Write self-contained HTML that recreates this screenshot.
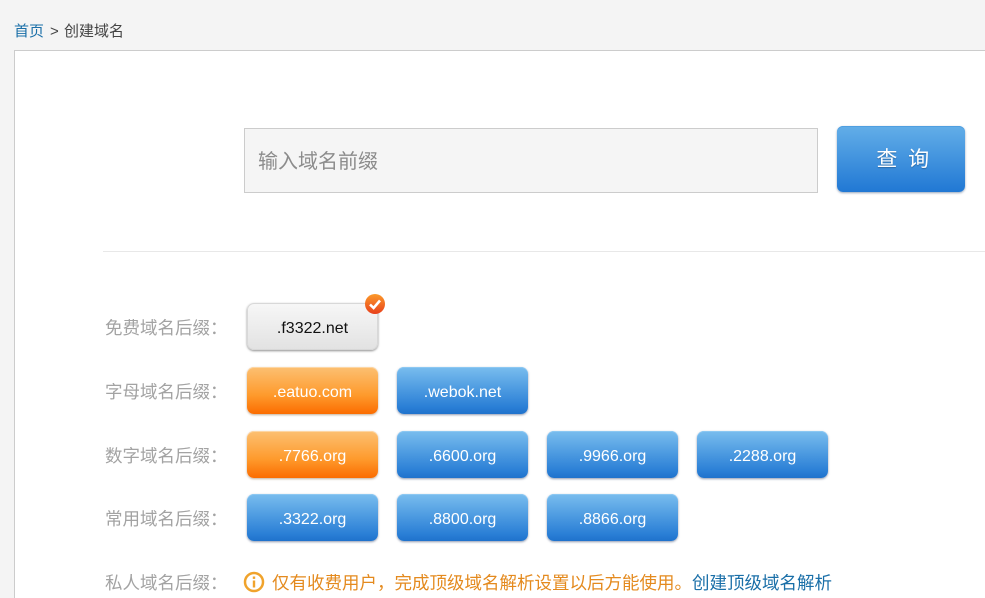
<!DOCTYPE html>
<html lang="zh">
<head>
<meta charset="utf-8">
<title>创建域名</title>
<style>
html,body{margin:0;padding:0;width:985px;height:598px;overflow:hidden;}
body{background:#f4f4f4;position:relative;font-family:"Liberation Sans","Noto Sans CJK SC",sans-serif;}
.abs{position:absolute;white-space:nowrap;}
.crumb{top:22px;font-size:15px;line-height:20px;color:#444;}
.crumb a{color:#1a6fa8;text-decoration:none;}
.panel{position:absolute;left:14px;top:50px;width:971px;height:548px;background:#fff;border:1px solid #ccc;border-right:0;border-bottom:0;box-sizing:border-box;}
.input{position:absolute;left:244px;top:128px;width:574px;height:65px;box-sizing:border-box;background:#f5f5f5;border:1px solid #ccc;font-size:20px;line-height:67px;padding-left:13px;color:#8c8c8c;}
.query{position:absolute;left:837px;top:126px;width:128px;height:66px;border-radius:6px;background:linear-gradient(#63aee8,#2178d4);box-shadow:0 1px 2px rgba(60,90,130,.55),inset 0 1px 0 #4f9fe0;color:#fff;font-size:21px;line-height:68px;text-align:center;letter-spacing:2.5px;text-indent:6px;text-shadow:0 1px 1px rgba(0,0,0,.25);white-space:nowrap;}
.hr{position:absolute;left:103px;top:251px;width:882px;height:1px;background:#e8e8e8;}
.label{position:absolute;left:105px;font-size:17.5px;line-height:26px;color:#a3a3a3;white-space:nowrap;}
.b{position:absolute;width:131px;height:47px;border-radius:7px;font-size:16px;line-height:52px;text-align:center;color:#fff;white-space:nowrap;}
.blue{background:linear-gradient(#79bdee,#2a7fd6 85%,#1f72cc);box-shadow:0 1px 2px rgba(50,70,110,.55),inset 0 1px 0 #8cc8f2;}
.orange{background:linear-gradient(#fcc072,#fe9a2c 60%,#fb6c00);box-shadow:0 1px 2px rgba(120,70,20,.45),inset 0 1px 0 #fdd6a4;}
.gray{background:linear-gradient(#f7f7f7,#e2e2e2);color:#111;box-shadow:0 1px 2px rgba(50,50,50,.55),inset 0 0 0 1px #d8d8d8;}
.note{left:272px;top:570px;font-size:17.5px;line-height:26px;color:#e48a1e;}
.note a{color:#1a6fa8;text-decoration:none;}
</style>
</head>
<body>
<div class="abs crumb" style="left:14px"><a href="#">首页</a></div>
<div class="abs crumb" style="left:50px">&gt;</div>
<div class="abs crumb" style="left:64px">创建域名</div>
<div class="panel"></div>
<div class="input">输入域名前缀</div>
<div class="query">查 询</div>
<div class="hr"></div>

<div class="label" style="top:315px">免费域名后缀：</div>
<div class="b gray" style="left:247px;top:303px">.f3322.net</div>
<svg class="abs" style="left:364px;top:293px" width="22" height="22" viewBox="0 0 22 22">
  <defs><linearGradient id="g" x1="0" y1="0" x2="0" y2="1"><stop offset="0" stop-color="#fb9a2a"/><stop offset="1" stop-color="#e8401c"/></linearGradient></defs>
  <circle cx="11" cy="11" r="10" fill="url(#g)"/>
  <path d="M6 11.5 L9.6 15 L16 7.5" fill="none" stroke="#fff" stroke-width="2.6"/>
</svg>

<div class="label" style="top:379px">字母域名后缀：</div>
<div class="b orange" style="left:247px;top:367px">.eatuo.com</div>
<div class="b blue" style="left:397px;top:367px">.webok.net</div>

<div class="label" style="top:443px">数字域名后缀：</div>
<div class="b orange" style="left:247px;top:431px">.7766.org</div>
<div class="b blue" style="left:397px;top:431px">.6600.org</div>
<div class="b blue" style="left:547px;top:431px">.9966.org</div>
<div class="b blue" style="left:697px;top:431px">.2288.org</div>

<div class="label" style="top:506px">常用域名后缀：</div>
<div class="b blue" style="left:247px;top:494px">.3322.org</div>
<div class="b blue" style="left:397px;top:494px">.8800.org</div>
<div class="b blue" style="left:547px;top:494px">.8866.org</div>

<div class="label" style="top:570px">私人域名后缀：</div>
<svg class="abs" style="left:243px;top:571px" width="22" height="22" viewBox="0 0 22 22">
  <circle cx="11" cy="11" r="9" fill="none" stroke="#f0a32c" stroke-width="2.5"/>
  <rect x="9.8" y="9.5" width="2.4" height="7" fill="#f0a32c"/>
  <rect x="9.8" y="5.5" width="2.4" height="2.4" fill="#f0a32c"/>
</svg>
<div class="abs note">仅有收费用户，完成顶级域名解析设置以后方能使用。<a href="#">创建顶级域名解析</a></div>
</body>
</html>
